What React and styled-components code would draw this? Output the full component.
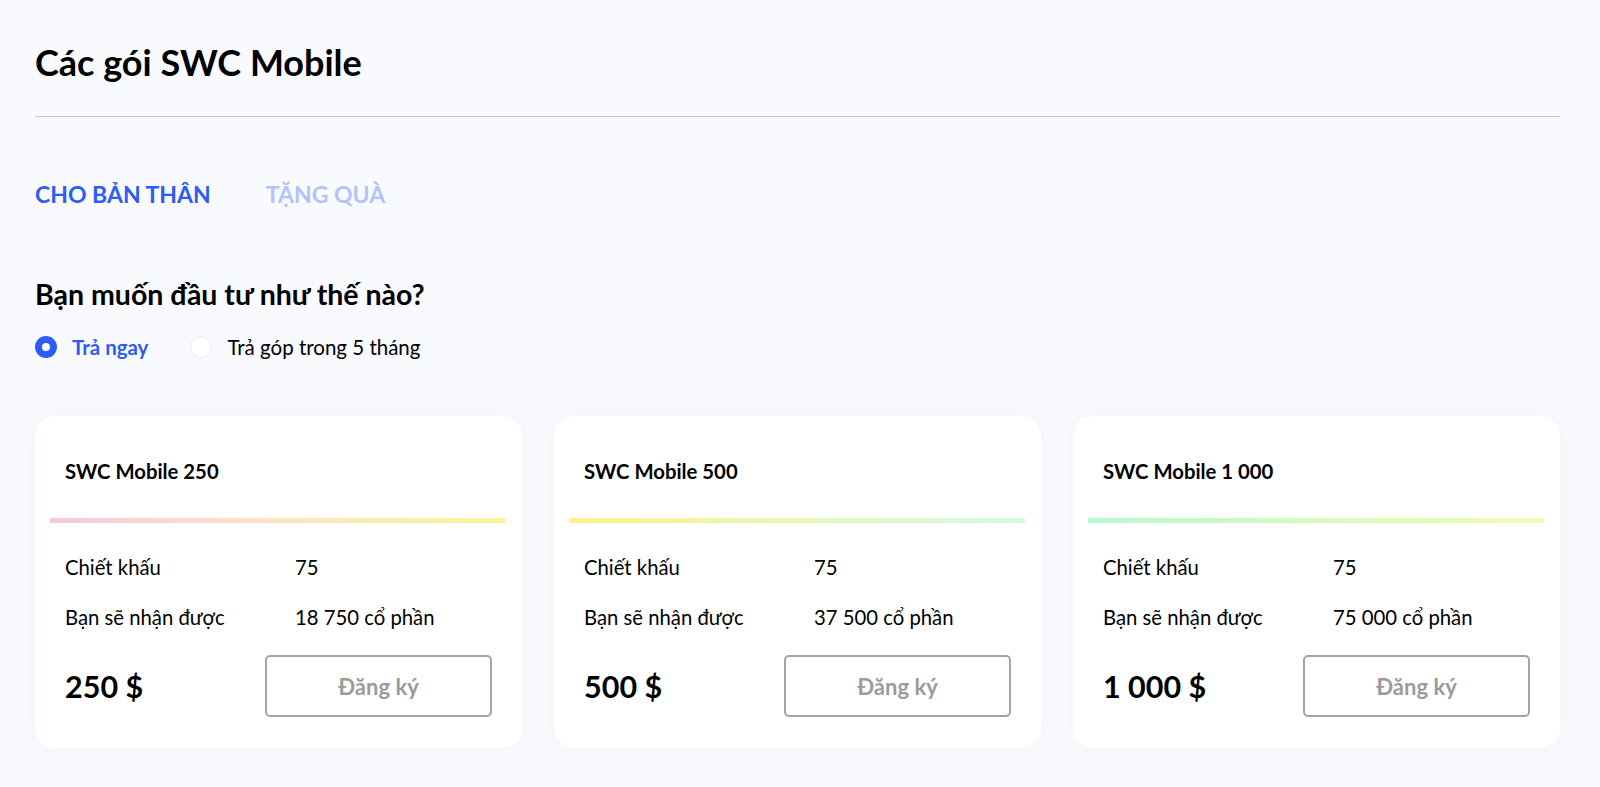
import React, { useState } from "react";
import styled, { createGlobalStyle } from "styled-components";

const GlobalStyle = createGlobalStyle`
  * { box-sizing: border-box; }
  body {
    margin: 0;
    background: #f9fafe;
    font-family: Lato, "Noto Sans", sans-serif;
    color: #000;
  }
`;

const plans = [
  { name: "SWC Mobile 250", discount: "75", shares: "18 750 cổ phần", price: "250 $", line: "linear-gradient(90deg, #f8c8dd 0%, #fbe2c6 45%, #fdf49a 100%)" },
  { name: "SWC Mobile 500", discount: "75", shares: "37 500 cổ phần", price: "500 $", line: "linear-gradient(90deg, #fdf08a 0%, #e6f8bd 55%, #d3fde6 100%)" },
  { name: "SWC Mobile 1 000", discount: "75", shares: "75 000 cổ phần", price: "1 000 $", line: "linear-gradient(90deg, #b6f8cf 0%, #d6fbbf 50%, #f2fcb3 100%)" },
];

const App = () => {
  const [tab, setTab] = useState("self");
  const [pay, setPay] = useState("now");

  return (
    <Page>
      <GlobalStyle />
      <Title>Các gói SWC Mobile</Title>
      <Divider />
      <Tabs>
        <Tab active={tab === "self"} onClick={() => setTab("self")}>CHO BẢN THÂN</Tab>
        <Tab active={tab === "gift"} onClick={() => setTab("gift")}>TẶNG QUÀ</Tab>
      </Tabs>
      <Question>Bạn muốn đầu tư như thế nào?</Question>
      <RadioGroup>
        <RadioOption onClick={() => setPay("now")}>
          <RadioDot checked={pay === "now"} />
          <RadioLabel checked={pay === "now"}>Trả ngay</RadioLabel>
        </RadioOption>
        <RadioOption onClick={() => setPay("later")}>
          <RadioDot checked={pay === "later"} />
          <RadioLabel checked={pay === "later"}>Trả góp trong 5 tháng</RadioLabel>
        </RadioOption>
      </RadioGroup>
      <Cards>
        {plans.map((p) => (
          <Card key={p.name}>
            <CardTitle>{p.name}</CardTitle>
            <ColorLine bg={p.line} />
            <InfoGrid>
              <span>Chiết khấu</span>
              <span>{p.discount}</span>
              <span>Bạn sẽ nhận được</span>
              <span>{p.shares}</span>
            </InfoGrid>
            <CardFooter>
              <Price>{p.price}</Price>
              <SignupButton>Đăng ký</SignupButton>
            </CardFooter>
          </Card>
        ))}
      </Cards>
    </Page>
  );
};

const Page = styled.div`
  padding: 40px 40px 40px 35px;
`;

const Title = styled.h1`
  margin: 0;
  font-size: 36px;
  line-height: 44px;
  font-weight: 700;
`;

const Divider = styled.hr`
  margin: 32px 0 0;
  border: none;
  border-top: 1px solid #c9c9cc;
`;

const Tabs = styled.div`
  display: flex;
  gap: 55px;
  margin-top: 65px;
`;

const Tab = styled.div`
  font-size: 23px;
  line-height: 24px;
  font-weight: 700;
  cursor: pointer;
  color: ${(p) => (p.active ? "#2e5cf5" : "#b2c3fc")};
`;

const Question = styled.h2`
  margin: 71px 0 0;
  font-size: 28.5px;
  line-height: 34px;
  font-weight: 700;
`;

const RadioGroup = styled.div`
  display: flex;
  gap: 42px;
  margin-top: 24px;
`;

const RadioOption = styled.label`
  display: flex;
  align-items: center;
  gap: 15px;
  cursor: pointer;
`;

const RadioDot = styled.span`
  width: 22px;
  height: 22px;
  border-radius: 50%;
  background: #fff;
  border: ${(p) => (p.checked ? "7px solid #2e5cf5" : "1px solid #ececf0")};
`;

const RadioLabel = styled.span`
  font-size: 20.5px;
  line-height: 24px;
  font-weight: ${(p) => (p.checked ? 700 : 400)};
  color: ${(p) => (p.checked ? "#2e5cf5" : "#000")};
`;

const Cards = styled.div`
  display: grid;
  grid-template-columns: repeat(3, 1fr);
  gap: 32px;
  margin-top: 57px;
`;

const Card = styled.div`
  background: #fff;
  border-radius: 20px;
  padding: 43px 30px 31px;
  box-shadow: 0 0 24px rgba(20, 30, 80, 0.03);
`;

const CardTitle = styled.div`
  font-size: 20.3px;
  line-height: 24px;
  font-weight: 700;
`;

const ColorLine = styled.div`
  height: 5px;
  margin: 35px -14px 0 -15px;
  background: ${(p) => p.bg};
`;

const InfoGrid = styled.div`
  display: grid;
  grid-template-columns: 230px 1fr;
  row-gap: 26px;
  margin-top: 32px;
  font-size: 20.3px;
  line-height: 24px;
`;

const CardFooter = styled.div`
  display: flex;
  align-items: center;
  justify-content: space-between;
  margin-top: 26px;
`;

const Price = styled.div`
  font-size: 30.5px;
  font-weight: 700;
`;

const SignupButton = styled.button`
  width: 227px;
  height: 62px;
  background: #fff;
  border: 2px solid #a3a3a3;
  border-radius: 5px;
  font-family: inherit;
  font-size: 22px;
  font-weight: 700;
  color: #9b9b9b;
  cursor: pointer;
`;

export default App;
